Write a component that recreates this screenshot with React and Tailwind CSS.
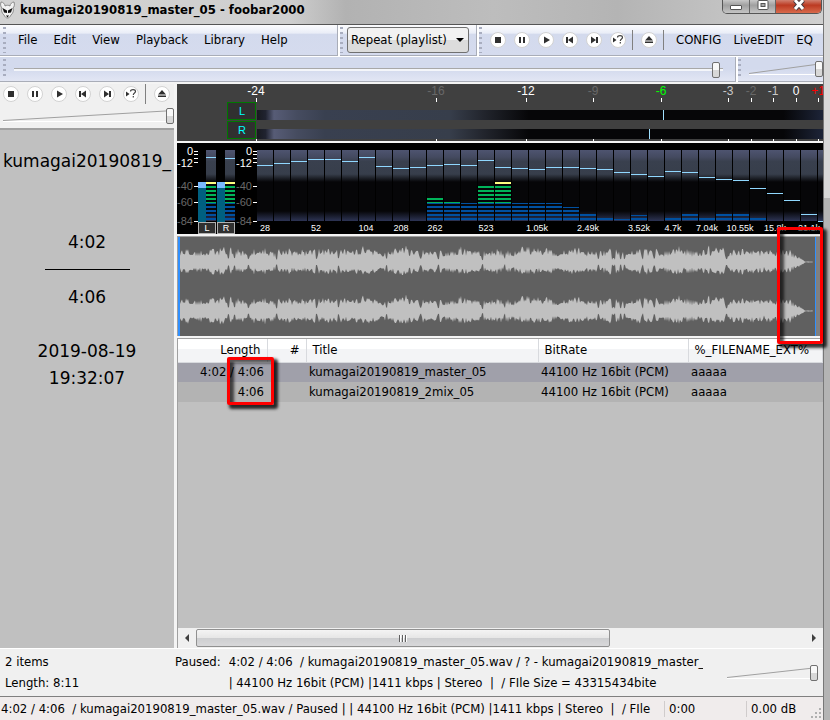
import React from "react";

const transport = ["Stop", "Pause", "Play", "Previous", "Next", "Random"];

const menus = ["File", "Edit", "View", "Playback", "Library", "Help"];

const tracks = [
  {
    length: "4:02 / 4:06",
    title: "kumagai20190819_master_05",
    bitrate: "44100 Hz 16bit (PCM)",
    file: "aaaaa",
    row: "h-5 bg-[#a0a0aa]",
  },
  {
    length: "4:06",
    title: "kumagai20190819_2mix_05",
    bitrate: "44100 Hz 16bit (PCM)",
    file: "aaaaa",
    row: "h-5 bg-[#b3b3b3]",
  },
];

const dbMarks = [
  { x: 79, label: "-24", color: "#fff" },
  { x: 259, label: "-16", color: "#686868" },
  { x: 349, label: "-12", color: "#fff" },
  { x: 416, label: "-9", color: "#686868" },
  { x: 484, label: "-6", color: "#00ff00" },
  { x: 551, label: "-3", color: "#c8c8c8" },
  { x: 574, label: "-2", color: "#686868" },
  { x: 596, label: "-1", color: "#c8c8c8" },
  { x: 619, label: "0", color: "#fff" },
  { x: 641, label: "+1", color: "#ff0000" },
];

// peak line of every band, in pixels from the top of the spectrum
const peaks = [
  22, 20, 18, 16, 16, 18, 14, 23, 25, 24, 22, 21, 22, 17, 24, 25, 26, 24, 24,
  25, 26, 29, 31, 33, 28, 29, 34, 36, 37, 45, 50, 57, 71, 78,
];

// top of the lit segments, 78 = nothing lit
const levels = [
  78, 78, 78, 78, 78, 78, 78, 78, 78, 78, 55, 59, 60, 43, 39, 60, 60, 60, 64,
  71, 74, 76, 72, 78, 75, 71, 75, 71, 71, 75, 78, 78, 78, 78,
];

const freqs = [
  { x: 88, label: "28" },
  { x: 139, label: "52" },
  { x: 189, label: "104" },
  { x: 224, label: "208" },
  { x: 258, label: "262" },
  { x: 309, label: "523" },
  { x: 360, label: "1.05k" },
  { x: 411, label: "2.49k" },
  { x: 462, label: "3.52k" },
  { x: 496, label: "4.7k" },
  { x: 530, label: "7.04k" },
  { x: 563, label: "10.55k" },
  { x: 598, label: "15.8k" },
  { x: 632, label: "21.1k" },
];

const segments = [
  { y: 39, h: 2, color: "#ffff80" },
  { y: 43, h: 2, color: "#00b45a" },
  { y: 47, h: 2, color: "#00b45a" },
  { y: 51, h: 2, color: "#00b45a" },
  { y: 55, h: 2, color: "#00b45a" },
  { y: 59, h: 1, color: "#00b45a" },
  { y: 60, h: 1, color: "#0050a0" },
  { y: 63, h: 2, color: "#0050a0" },
  { y: 67, h: 2, color: "#0050a0" },
  { y: 71, h: 2, color: "#0050a0" },
  { y: 75, h: 2, color: "#0050a0" },
];

const Glyph = ({ name }) => {
  switch (name) {
    case "Stop":
      return <rect x="5" y="5" width="6" height="6" />;
    case "Pause":
      return <path d="M5 5h2v6H5zM9 5h2v6H9z" />;
    case "Play":
      return <path d="M6 4.500l6 3.500-6 3.500z" />;
    case "Previous":
      return <path d="M4 5h2v6H4zM11 4.500v7L6 8z" />;
    case "Next":
      return <path d="M5 4.500l5 3.500-5 3.500zM10 5h2v6h-2z" />;
    case "Random":
      return (
        <>
          <path d="M3 5.500L6.500 8 3 10.500z" />
          <path
            d="M7.500 5.500c0-2.500 5-2.500 5 0 0 1.500-2.200 1.500-2.200 3.500M10.300 10v1.500"
            fill="none"
            stroke="#404040"
            strokeWidth="1.200"
          />
        </>
      );
    default:
      return <path d="M8 4l4 4.500H4zM4 9.500h8v1.500H4z" />;
  }
};

const RoundButton = ({ name }) => (
  <button type="button" aria-label={name} className="size-4 shrink-0">
    <svg viewBox="0 0 16 16" className="size-4" fill="#303030">
      <circle cx="8" cy="8" r="7.500" fill="#fff" stroke="#d2d2d2" />
      <Glyph name={name} />
    </svg>
  </button>
);

const Transport = () => (
  <div className="flex items-center">
    <div className="flex gap-2">
      {transport.map((name) => (
        <RoundButton key={name} name={name} />
      ))}
    </div>
    <div className="mr-2 ml-[6px] h-5 w-px bg-[#808080]"></div>
    <RoundButton name="Eject" />
  </div>
);

const Grip = () => (
  <div className="my-[2px] w-[3px] shrink-0 self-stretch bg-[repeating-linear-gradient(180deg,#a8adbf_0_2px,transparent_2px_5px)]"></div>
);

const thumb =
  "[&::-webkit-slider-thumb]:appearance-none [&::-webkit-slider-thumb]:h-4 [&::-webkit-slider-thumb]:w-2 [&::-webkit-slider-thumb]:rounded-[2px] [&::-webkit-slider-thumb]:border [&::-webkit-slider-thumb]:border-[#707070] [&::-webkit-slider-thumb]:bg-[linear-gradient(#f8f8f8_50%,#d8d8d8_50%)]";

// volume fader: a thin wedge with the thumb at the loud end
const Volume = ({ label }) => (
  <div className="relative h-5 w-full">
    <svg
      viewBox="0 0 100 20"
      preserveAspectRatio="none"
      className="block h-5 w-full"
    >
      <path
        d="M0 15.500H100"
        stroke="#fff"
        vectorEffect="non-scaling-stroke"
      />
      <path
        d="M0 14.500L100 4.500"
        stroke="#a0a0a0"
        vectorEffect="non-scaling-stroke"
      />
    </svg>
    <input
      type="range"
      aria-label={label}
      defaultValue="100"
      className={`absolute inset-0 h-5 w-full appearance-none bg-transparent ${thumb}`}
    />
  </div>
);

const TitleBar = () => (
  <header className="flex h-[25px] items-start justify-between border-b border-[#555] bg-[linear-gradient(90deg,#d2d2d2,#cfcfcf_35%,#b2b2b2_42%,#bdbdbd_60%,#b4b4b4_75%,#d0d0d0)]">
    <div className="flex items-center gap-[5px] text-[13px] leading-5 font-bold">
      <svg viewBox="0 0 15 18" className="h-[18px] w-[15px]">
        <path
          d="M1 1c2 0 4 2 4 4 1.500-1 3.500-1 5 0 0-2 2-4 4-4 1 3 0 5-1 6 1 3 0 5-2 7-1 2-2 3-3.500 3S5 16 4 14c-2-2-3-4-2-7C1 6 0 4 1 1z"
          fill="#f2f2f2"
          stroke="#777"
          strokeWidth="0.800"
        />
        <path
          d="M2.500 7l4.500 2.500v2.500L4 11.500zM12.500 7L8 9.500V12l3-.5z"
          fill="#111"
        />
        <path d="M6 14.500h3l-1.500 2z" fill="#111" />
      </svg>
      <h1>kumagai20190819_master_05 - foobar2000</h1>
    </div>
    <div className="mr-[1px] flex h-[14px] overflow-hidden rounded-b-[5px] border border-t-0 border-[#555]">
      <button
        type="button"
        aria-label="Minimize"
        className="flex w-[27px] justify-center border-r border-[#666] bg-[linear-gradient(#c8c8c8,#a0a0a0_40%,#c4c4c4)] pt-[5px]"
      >
        <span className="h-[5px] w-3 rounded-[1px] border border-[#555] bg-white"></span>
      </button>
      <button
        type="button"
        aria-label="Maximize"
        className="flex w-[26px] justify-center border-r border-[#666] bg-[linear-gradient(#c8c8c8,#a0a0a0_40%,#c4c4c4)]"
      >
        <svg viewBox="0 0 12 11" className="h-[11px] w-3">
          <rect x="1" y="0.500" width="10" height="9" rx="1" fill="#fff" stroke="#555" />
          <rect x="4" y="3.500" width="4" height="3" fill="#aaa" stroke="#555" />
        </svg>
      </button>
      <button
        type="button"
        aria-label="Close"
        className="flex w-[45px] justify-center bg-[linear-gradient(#d08070,#bc3a22_40%,#d86a4c)]"
      >
        <svg viewBox="0 0 14 11" className="h-[11px] w-[14px]">
          <path d="M3 0l8 9M11 0L3 9" stroke="#4a3a40" strokeWidth="5" />
          <path d="M3 0l8 9M11 0L3 9" stroke="#fff" strokeWidth="3" />
        </svg>
      </button>
    </div>
  </header>
);

const bar =
  "flex items-center bg-[linear-gradient(#fcfcfe,#e9edf7_28%,#d3daed_29%,#d5dbee)] border-b border-[#a9adb8]";

const MenuBar = () => (
  <div className="flex h-8 gap-[2px] border-b border-white bg-white">
    <nav className={`${bar} w-[338px] border-r pl-[3px]`}>
      <Grip />
      <div className="flex gap-4 pl-3">
        {menus.map((menu) => (
          <button key={menu} type="button">
            {menu}
          </button>
        ))}
      </div>
    </nav>
    <div className={`${bar} w-[137px] border-r`}>
      <Grip />
      <div className="relative ml-1">
        <select
          aria-label="Playback order"
          className="block h-[26px] w-[122px] appearance-none rounded-[3px] border border-[#707070] bg-[linear-gradient(#f2f2f2_50%,#dcdcdc_50%)] pl-[3px]"
        >
          <option>Repeat (playlist)</option>
        </select>
        <svg
          viewBox="0 0 8 4"
          className="pointer-events-none absolute top-[11px] right-[5px] h-1 w-2"
        >
          <path d="M0 0h8L4 4z" />
        </svg>
      </div>
    </div>
    <div className={`${bar} min-w-0 flex-1`}>
      <Grip />
      <div className="flex items-center gap-[6px] pl-2">
        <Transport />
        <div className="h-5 w-px bg-[#808080]"></div>
      </div>
      <div className="flex gap-3 pl-3">
        <button type="button">CONFIG</button>
        <button type="button">LiveEDIT</button>
        <button type="button">EQ</button>
      </div>
    </div>
  </div>
);

const SeekBar = () => (
  <div className="flex h-[27px] gap-[2px] border-b-2 border-[#f4f4f4] bg-white">
    <div className="flex min-w-0 flex-1 items-center border-r border-b border-[#a9adb8] bg-[linear-gradient(#d3daed,#d3daed_50%,#e2e6f4)] pl-[3px]">
      <Grip />
      <div className="relative mr-3 ml-2 flex-1">
        <div className="h-[3px] border-t border-[#a8a8a8] bg-[#f4f6fa]"></div>
        <input
          type="range"
          aria-label="Seek"
          min="0"
          max="246"
          defaultValue="245"
          className={`absolute -top-2 left-0 h-5 w-full appearance-none bg-transparent ${thumb}`}
        />
      </div>
    </div>
    <div className="flex w-[85px] items-center border-b border-[#a9adb8] bg-[linear-gradient(#d3daed,#d3daed_50%,#e2e6f4)]">
      <Grip />
      <div className="flex-1 pl-2">
        <Volume label="Volume" />
      </div>
    </div>
  </div>
);

const SidePanel = () => (
  <aside className="flex w-[174px] shrink-0 flex-col bg-[#f0f0f0]">
    <div className="h-[46px] border-b-2 border-[#a0a0a0] pl-[3px]">
      <Transport />
      <div className="pt-[2px]">
        <Volume label="Panel volume" />
      </div>
    </div>
    <div className="flex flex-1 flex-col items-center overflow-hidden bg-[#c0c0c0] font-['DejaVu_Sans',sans-serif] text-[17px] leading-[27px]">
      <p className="pt-[18px]">kumagai20190819_</p>
      <p className="pt-[54px]">4:02</p>
      <div className="mt-[13px] h-px w-[85px] bg-black"></div>
      <p className="pt-[14px]">4:06</p>
      <p className="pt-[27px]">2019-08-19</p>
      <p>19:32:07</p>
    </div>
  </aside>
);

const PeakMeter = () => (
  <svg
    className="block h-[57px] w-full bg-[#404040] font-['Liberation_Sans',sans-serif] text-[12px]"
    textAnchor="middle"
  >
    <defs>
      <linearGradient id="meter" gradientUnits="userSpaceOnUse" x1="80" x2="646">
        <stop offset="0" stopColor="#181a20" />
        <stop offset="0.015" stopColor="#202330" />
        <stop offset="0.030" stopColor="#575c76" />
        <stop offset="0.070" stopColor="#464c60" />
        <stop offset="0.120" stopColor="#394050" />
        <stop offset="0.340" stopColor="#373e4b" />
        <stop offset="0.400" stopColor="#22252d" />
        <stop offset="0.480" stopColor="#060608" />
        <stop offset="0.930" stopColor="#060608" />
        <stop offset="1" stopColor="#1d2438" />
      </linearGradient>
    </defs>
    {dbMarks.map((mark) => (
      <g key={mark.label}>
        <text x={mark.x} y="11" fill={mark.color}>
          {mark.label}
        </text>
        <rect x={mark.x} y="14" width="1" height="4" fill="#fff" />
        <rect x={mark.x} y="55" width="1" height="2" fill="#fff" />
      </g>
    ))}
    <rect x="80" y="26" width="100%" height="10" fill="url(#meter)" />
    <rect x="80" y="45" width="100%" height="10" fill="url(#meter)" />
    <rect x="486" y="26" width="1" height="10" fill="#a0e0ff" />
    <rect x="472" y="45" width="1" height="10" fill="#a0e0ff" />
    <rect x="50.500" y="18.500" width="28" height="17" fill="#303030" stroke="#007800" />
    <rect x="50.500" y="37.500" width="28" height="17" fill="#303030" stroke="#007800" />
    <g fill="#00ffff" fontSize="11">
      <text x="65" y="31">L</text>
      <text x="65" y="50">R</text>
    </g>
  </svg>
);

const Band = ({ x, width, level, peak }) => (
  <g>
    <rect x={x} y="7" width={width} height="71" fill="url(#band)" />
    {segments
      .filter((s) => s.y + s.h > level)
      .map((s) => {
        const y = Math.max(s.y, level);
        return (
          <rect
            key={s.y}
            x={x}
            y={y}
            width={width}
            height={s.y + s.h - y}
            fill={s.color}
          />
        );
      })}
    <rect x={x} y={peak} width={width} height="1" fill="#90d8ff" />
  </g>
);

const Scale = ({ x }) => (
  <g textAnchor="end" fontSize="11">
    <g fill="#fff">
      <text x={x - 5} y="12">0</text>
      <text x={x - 5} y="24">-12</text>
      <rect x={x - 4} y="8" width="4" height="1" />
      <rect x={x - 4} y="11" width="4" height="1" />
      <rect x={x - 4} y="15" width="4" height="1" />
      <rect x={x - 4} y="19" width="4" height="1" />
      <rect x={x - 4} y="43" width="4" height="1" />
      <rect x={x - 4} y="59" width="4" height="1" />
      <rect x={x - 4} y="78" width="4" height="1" />
    </g>
    <g fill="#686868">
      <text x={x - 5} y="47">-40</text>
      <text x={x - 5} y="63">-60</text>
      <text x={x - 5} y="82">-84</text>
    </g>
  </g>
);

const Spectrum = () => (
  <svg className="block h-[91px] w-full bg-black font-['Liberation_Sans',sans-serif]">
    <defs>
      <linearGradient id="band" gradientUnits="userSpaceOnUse" x1="0" x2="0" y1="7" y2="78">
        <stop offset="0" stopColor="#4e5470" />
        <stop offset="0.100" stopColor="#444a60" />
        <stop offset="0.160" stopColor="#39404e" />
        <stop offset="0.340" stopColor="#373e4b" />
        <stop offset="0.450" stopColor="#060608" />
        <stop offset="0.860" stopColor="#060608" />
        <stop offset="1" stopColor="#2d3454" />
      </linearGradient>
    </defs>
    <Scale x={21} />
    <Scale x={80} />
    <Band x={29} width={10} level={39} peak={14} />
    <Band x={48} width={10} level={39} peak={15} />
    <rect x="21" y="39" width="8" height="6" fill="#78b8ff" />
    <rect x="21" y="45" width="8" height="34" fill="#006080" />
    <rect x="40" y="39" width="8" height="6" fill="#78b8ff" />
    <rect x="40" y="45" width="8" height="34" fill="#006080" />
    {peaks.map((peak, i) => (
      <Band key={i} x={80 + i * 17} width={16} level={levels[i]} peak={peak} />
    ))}
    <g fill="#303030" stroke="#b0b0b0">
      <rect x="21.500" y="79.500" width="17" height="11" />
      <rect x="40.500" y="79.500" width="17" height="11" />
    </g>
    <g fill="#fff" textAnchor="middle" fontSize="9">
      <text x="30" y="88">L</text>
      <text x="49" y="88">R</text>
      {freqs.map((f) => (
        <text key={f.label} x={f.x} y="88">
          {f.label}
        </text>
      ))}
    </g>
  </svg>
);

const noise = (n) => {
  const v = Math.sin(n * 127.1 + 11.3) * 43758.5453;
  return v - Math.floor(v);
};

const channelPath = (center, seed) => {
  const top = [];
  const bottom = [];
  for (let x = 2; x <= 635; x++) {
    const fade = x < 612 ? 1 : Math.max(0.04, (628 - x) / 16);
    // the beat: short hits with a quieter gap after each
    const swell = 0.8 + 0.2 * Math.abs(Math.sin(x / 11 + noise(x >> 5)));
    const gap = noise((x >> 1) + 7) > 0.95 ? 0.35 : 1;
    const hit = noise((x >> 1) * 3.7) > 0.88 ? 3 : 0;
    const tooth = 6 + noise(x) * 7;
    const up = (tooth + hit + noise(x + seed)) * swell * gap * fade;
    const down = (tooth * 0.9 + noise(x * 3 + seed) * 2) * swell * gap * fade;
    top.push(`${x} ${(center - up).toFixed(1)}`);
    bottom.unshift(`${x} ${(center + down).toFixed(1)}`);
  }
  return `M${top.join("L")}L${bottom.join("L")}z`;
};

const Waveform = () => (
  <svg
    viewBox="0 0 645 99"
    preserveAspectRatio="none"
    className="block h-[100px] w-full border-t border-l border-[#a0a0a0] bg-[#606060]"
  >
    <rect width="2" height="99" fill="#3090ff" />
    <path d={channelPath(25, 0)} fill="#c0c0c0" />
    <path d={channelPath(74, 2)} fill="#c0c0c0" />
    <rect x="638" width="7" height="99" fill="#808080" />
    <rect x="637" width="1" height="99" fill="#3090ff" />
  </svg>
);

const Playlist = () => (
  <div className="flex flex-1 flex-col border-t border-l border-[#a0a0a0] bg-[#c0c0c0]">
    <table className="w-full table-fixed border-collapse">
      <thead>
        <tr className="h-[23px] bg-[linear-gradient(#fff_45%,#f3f4f6_45%)] text-left [&>th]:border-r [&>th]:border-b [&>th]:border-[#d8dade] [&>th]:font-normal">
          <th className="w-[89px] pr-[6px] text-right">Length</th>
          <th className="w-[39px] pr-[6px] text-right">#</th>
          <th className="w-[232px] pl-[6px]">Title</th>
          <th className="w-[150px] pl-[6px]">BitRate</th>
          <th className="pl-[6px]">%_FILENAME_EXT%</th>
        </tr>
      </thead>
      <tbody>
        {tracks.map((track) => (
          <tr key={track.title} className={track.row}>
            <td className="pr-[3px] text-right">{track.length}</td>
            <td></td>
            <td className="pl-[3px]">{track.title}</td>
            <td className="pl-[3px]">{track.bitrate}</td>
            <td className="pl-[3px]">{track.file}</td>
          </tr>
        ))}
      </tbody>
    </table>
    <div className="mt-auto flex h-5 items-center bg-[#f0f0f0]">
      <button type="button" aria-label="Scroll left" className="flex w-[18px] justify-center">
        <svg viewBox="0 0 4 8" className="h-2 w-1">
          <path d="M4 0v8L0 4z" fill="#404040" />
        </svg>
      </button>
      <div className="flex-1">
        <div className="flex h-[18px] w-[68%] items-center justify-center gap-[1px] rounded-[2px] border border-[#909090] bg-[linear-gradient(#f4f4f4,#e6e6e6_50%,#cdced0_50%,#d8d8da)]">
          <span className="h-[7px] w-[2px] border-r border-white bg-[#606060]"></span>
          <span className="h-[7px] w-[2px] border-r border-white bg-[#606060]"></span>
          <span className="h-[7px] w-[2px] border-r border-white bg-[#606060]"></span>
        </div>
      </div>
      <button type="button" aria-label="Scroll right" className="flex w-[18px] justify-center">
        <svg viewBox="0 0 4 8" className="h-2 w-1">
          <path d="M0 0v8l4-4z" fill="#404040" />
        </svg>
      </button>
    </div>
  </div>
);

const marker =
  "pointer-events-none absolute rounded-[2px] border-[3px] border-[#ff0000] shadow-[3px_3px_3px_1px_rgba(0,0,0,0.8),inset_4px_3px_3px_0px_rgba(0,0,0,0.65)]";

const StatusPanel = () => (
  <section className="flex h-12 shrink-0 border-t border-white bg-[#f0f0f0] pt-[2px] leading-[21px] whitespace-pre">
    <div className="w-[170px] shrink-0 pl-[5px]">
      <p>2 items</p>
      <p>Length: 8:11</p>
    </div>
    <div className="flex min-w-0 flex-1 gap-2 overflow-hidden pl-[5px]">
      <p>Paused:</p>
      <div className="min-w-0 flex-1 overflow-hidden">
        <p>4:02 / 4:06  / kumagai20190819_master_05.wav / ? - kumagai20190819_master_</p>
        <p>| 44100 Hz 16bit (PCM) |1411 kbps | Stereo  |  / FIle Size = 43315434bite</p>
      </div>
    </div>
    <div className="mr-[5px] ml-6 w-[91px] shrink-0 pt-3">
      <Volume label="Master volume" />
    </div>
  </section>
);

const StatusBar = () => (
  <footer className="flex h-6 shrink-0 items-center border-t border-[#808080] bg-[#f0ecec] whitespace-pre">
    <p className="min-w-0 flex-1 overflow-hidden pl-[1px]">
      4:02 / 4:06  / kumagai20190819_master_05.wav / Paused | | 44100 Hz 16bit
      (PCM) |1411 kbps | Stereo  |  / FIle
    </p>
    <p className="w-[82px] border-l border-[#d0cccc] pl-1">0:00</p>
    <p className="w-[65px] border-l border-[#d0cccc] pl-1">0.00 dB</p>
    <svg viewBox="0 0 12 12" className="h-3 w-3 self-end" fill="#b0b0b0">
      <path d="M8 0h2v2H8zM8 4h2v2H8zM8 8h2v2H8zM4 4h2v2H4zM4 8h2v2H4zM0 8h2v2H0z" />
    </svg>
  </footer>
);

const App = () => {
  return (
    <div className="flex min-h-screen overflow-hidden font-['DejaVu_Sans_Condensed','DejaVu_Sans',sans-serif] text-[13px] leading-4 text-black">
      <div className="flex min-w-0 flex-1 flex-col border-r border-[#777]">
        <TitleBar />
        <MenuBar />
        <SeekBar />
        <div className="flex flex-1 gap-[3px] bg-[#f4f4f4]">
          <SidePanel />
          <main className="relative flex min-w-0 flex-1 flex-col gap-[2px]">
            <PeakMeter />
            <Spectrum />
            <Waveform />
            <Playlist />
            <div className={`${marker} top-[273px] left-[50px] h-12 w-[47px]`}></div>
            <div className={`${marker} top-[143px] right-0 h-[117px] w-[46px]`}></div>
          </main>
        </div>
        <StatusPanel />
        <StatusBar />
      </div>
      <div className="w-[6px] shrink-0 bg-[linear-gradient(#d8d8d8_0_198px,#b4b4b4_198px)]"></div>
    </div>
  );
};

export default App;
